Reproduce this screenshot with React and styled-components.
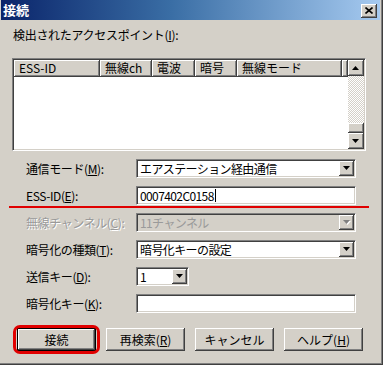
import styled, { createGlobalStyle } from 'styled-components'

const GlobalStyle = createGlobalStyle`
  html, body {
    margin: 0;
    padding: 0;
    background: #fff;
  }
  body {
    font-family: "Noto Sans CJK JP", "Noto Sans", sans-serif;
    font-size: 12px;
    color: #000;
  }
  * { box-sizing: border-box; }
`

const raised = `
  background: #d4d0c8;
  box-shadow: inset -1px -1px #404040, inset 1px 1px #fff, inset -2px -2px #808080;
`

const sunken = `
  border: 1px solid;
  border-color: #808080 #fff #fff #808080;
  box-shadow: inset 1px 1px #404040, inset -1px -1px #d4d0c8;
  padding: 1px;
`

const Window = styled.div`
  width: 383px;
  height: 365px;
  background: #d4d0c8;
  border-right: 1px solid #404040;
  border-bottom: 1px solid #404040;
  box-shadow: inset -1px -1px #808080;
  display: flex;
  flex-direction: column;
`

const TitleBar = styled.div`
  height: 20px;
  margin: 0 2px 0 1px;
  padding: 0 3px 0 2px;
  background: linear-gradient(to right, #0a246a 0%, #3a6ea5 45%, #a6caf0 100%);
  display: flex;
  align-items: center;
  justify-content: space-between;
  color: #fff;
  font-weight: bold;
  font-size: 13px;
  line-height: 14px;
`

const CloseButton = styled.div`
  ${raised}
  width: 16px;
  height: 14px;
  display: flex;
  align-items: center;
  justify-content: center;
  margin-top: 1px;
`

const Body = styled.div`
  padding: 8px 15px 0 12px;
  display: flex;
  flex-direction: column;
`

const SectionLabel = styled.div`
  line-height: 14px;
  margin-left: 1px;
  letter-spacing: -0.3px;
`

const ListFrame = styled.div`
  ${sunken}
  margin-top: 16px;
  width: 354px;
  height: 93px;
  background: #fff;
  display: flex;
`

const ListMain = styled.div`
  flex: 1;
  display: flex;
  flex-direction: column;
`

const HeaderRow = styled.div`
  display: flex;
  height: 17px;
`

const HeaderCell = styled.div`
  ${raised}
  width: ${(p) => (p.$w ? `${p.$w}px` : 'auto')};
  flex: ${(p) => (p.$w ? 'none' : '1')};
  padding-left: 5px;
  line-height: 16px;
  white-space: nowrap;
  overflow: hidden;
`

const ScrollBar = styled.div`
  width: 16px;
  display: flex;
  flex-direction: column;
`

const ScrollButton = styled.div`
  ${raised}
  width: 16px;
  height: 16px;
  display: flex;
  align-items: center;
  justify-content: center;
`

const Track = styled.div`
  flex: 1;
  background-color: #fff;
  background-image: repeating-conic-gradient(#d4d0c8 0 25%, #fff 0 50%);
  background-size: 2px 2px;
`

const Thumb = styled.div`
  ${raised}
  height: 10px;
`

const Form = styled.div`
  margin-top: 8px;
  display: flex;
  flex-direction: column;
  gap: 8px;
`

const Row = styled.div`
  position: relative;
  display: flex;
  align-items: center;
  height: 19px;
  padding-left: 14px;
`

const Label = styled.div`
  width: 110px;
  line-height: 19px;
  white-space: nowrap;
  letter-spacing: -0.4px;
  color: ${(p) => (p.$disabled ? '#9a9a9a' : '#000')};
  text-shadow: ${(p) => (p.$disabled ? '1px 1px #fff' : 'none')};
`

const Field = styled.div`
  ${sunken}
  width: ${(p) => p.$w || 220}px;
  height: 19px;
  background: ${(p) => (p.$disabled ? '#d4d0c8' : '#fff')};
  color: ${(p) => (p.$disabled ? '#9a9a9a' : '#000')};
  display: flex;
  align-items: center;
`

const FieldText = styled.div`
  flex: 1;
  padding-left: 2px;
  line-height: 15px;
  letter-spacing: -0.6px;
  white-space: nowrap;
  overflow: hidden;
  display: flex;
  align-items: center;
`

const Caret = styled.span`
  display: inline-block;
  width: 1px;
  height: 13px;
  background: #000;
  margin-left: 1px;
`

const DropButton = styled.div`
  ${raised}
  width: 15px;
  height: 15px;
  display: flex;
  align-items: center;
  justify-content: center;
`

const RedUnderline = styled.div`
  position: absolute;
  left: -3px;
  right: -2px;
  bottom: -3px;
  height: 2px;
  background: #e00000;
`

const ButtonRow = styled.div`
  margin-top: 15px;
  padding-left: 5px;
  display: flex;
  gap: 10px;
`

const ButtonWrap = styled.div`
  position: relative;
`

const Button = styled.button`
  ${raised}
  width: 79px;
  height: 23px;
  border: ${(p) => (p.$default ? '1px solid #000' : 'none')};
  padding: 0;
  font: inherit;
  color: #000;
  display: flex;
  align-items: center;
  justify-content: center;
`

const RedRing = styled.div`
  position: absolute;
  left: -4px;
  right: -4px;
  top: -3px;
  bottom: -3px;
  border: 3px solid #e00000;
  border-radius: 7px;
  pointer-events: none;
`

function Arrow({ up, disabled }) {
  const pts = up ? '0,4 7,4 3.5,0' : '0,0 7,0 3.5,4'
  return (
    <svg width="8" height="5" viewBox="0 0 8 5">
      {disabled && <polygon points={pts} fill="#fff" transform="translate(1 1)" />}
      <polygon points={pts} fill={disabled ? '#808080' : '#000'} />
    </svg>
  )
}

function Combo({ text, w, disabled }) {
  return (
    <Field $w={w} $disabled={disabled}>
      <FieldText>{text}</FieldText>
      <DropButton>
        <Arrow disabled={disabled} />
      </DropButton>
    </Field>
  )
}

export default function App() {
  return (
    <>
      <GlobalStyle />
      <Window>
        <TitleBar>
          <span>接続</span>
          <CloseButton>
            <svg width="8" height="7" viewBox="0 0 8 7">
              <path d="M0.5 0.5 L7.5 6.5 M7.5 0.5 L0.5 6.5" stroke="#000" strokeWidth="1.6" />
            </svg>
          </CloseButton>
        </TitleBar>
        <Body>
          <SectionLabel>
            検出されたアクセスポイント(<u>I</u>):
          </SectionLabel>
          <ListFrame>
            <ListMain>
              <HeaderRow>
                <HeaderCell $w={86}>ESS-ID</HeaderCell>
                <HeaderCell $w={52}>無線ch</HeaderCell>
                <HeaderCell $w={43}>電波</HeaderCell>
                <HeaderCell $w={42}>暗号</HeaderCell>
                <HeaderCell $w={105}>無線モード</HeaderCell>
                <HeaderCell />
              </HeaderRow>
            </ListMain>
            <ScrollBar>
              <ScrollButton>
                <Arrow up />
              </ScrollButton>
              <Track />
              <Thumb />
              <ScrollButton>
                <Arrow />
              </ScrollButton>
            </ScrollBar>
          </ListFrame>
          <Form>
            <Row>
              <Label>通信モード(<u>M</u>):</Label>
              <Combo text="エアステーション経由通信" />
            </Row>
            <Row>
              <Label>ESS-ID(<u>E</u>):</Label>
              <Field>
                <FieldText>
                  0007402C0158<Caret />
                </FieldText>
              </Field>
              <RedUnderline />
            </Row>
            <Row>
              <Label $disabled>無線チャンネル(<u>C</u>):</Label>
              <Combo text="11チャンネル" disabled />
            </Row>
            <Row>
              <Label>暗号化の種類(<u>T</u>):</Label>
              <Combo text="暗号化キーの設定" />
            </Row>
            <Row>
              <Label>送信キー(<u>D</u>):</Label>
              <Combo text="1" w={53} />
            </Row>
            <Row>
              <Label>暗号化キー(<u>K</u>):</Label>
              <Field>
                <FieldText />
              </Field>
            </Row>
          </Form>
          <ButtonRow>
            <ButtonWrap>
              <Button $default>接続</Button>
              <RedRing />
            </ButtonWrap>
            <Button>再検索(<u>R</u>)</Button>
            <Button>キャンセル</Button>
            <Button>ヘルプ(<u>H</u>)</Button>
          </ButtonRow>
        </Body>
      </Window>
    </>
  )
}
